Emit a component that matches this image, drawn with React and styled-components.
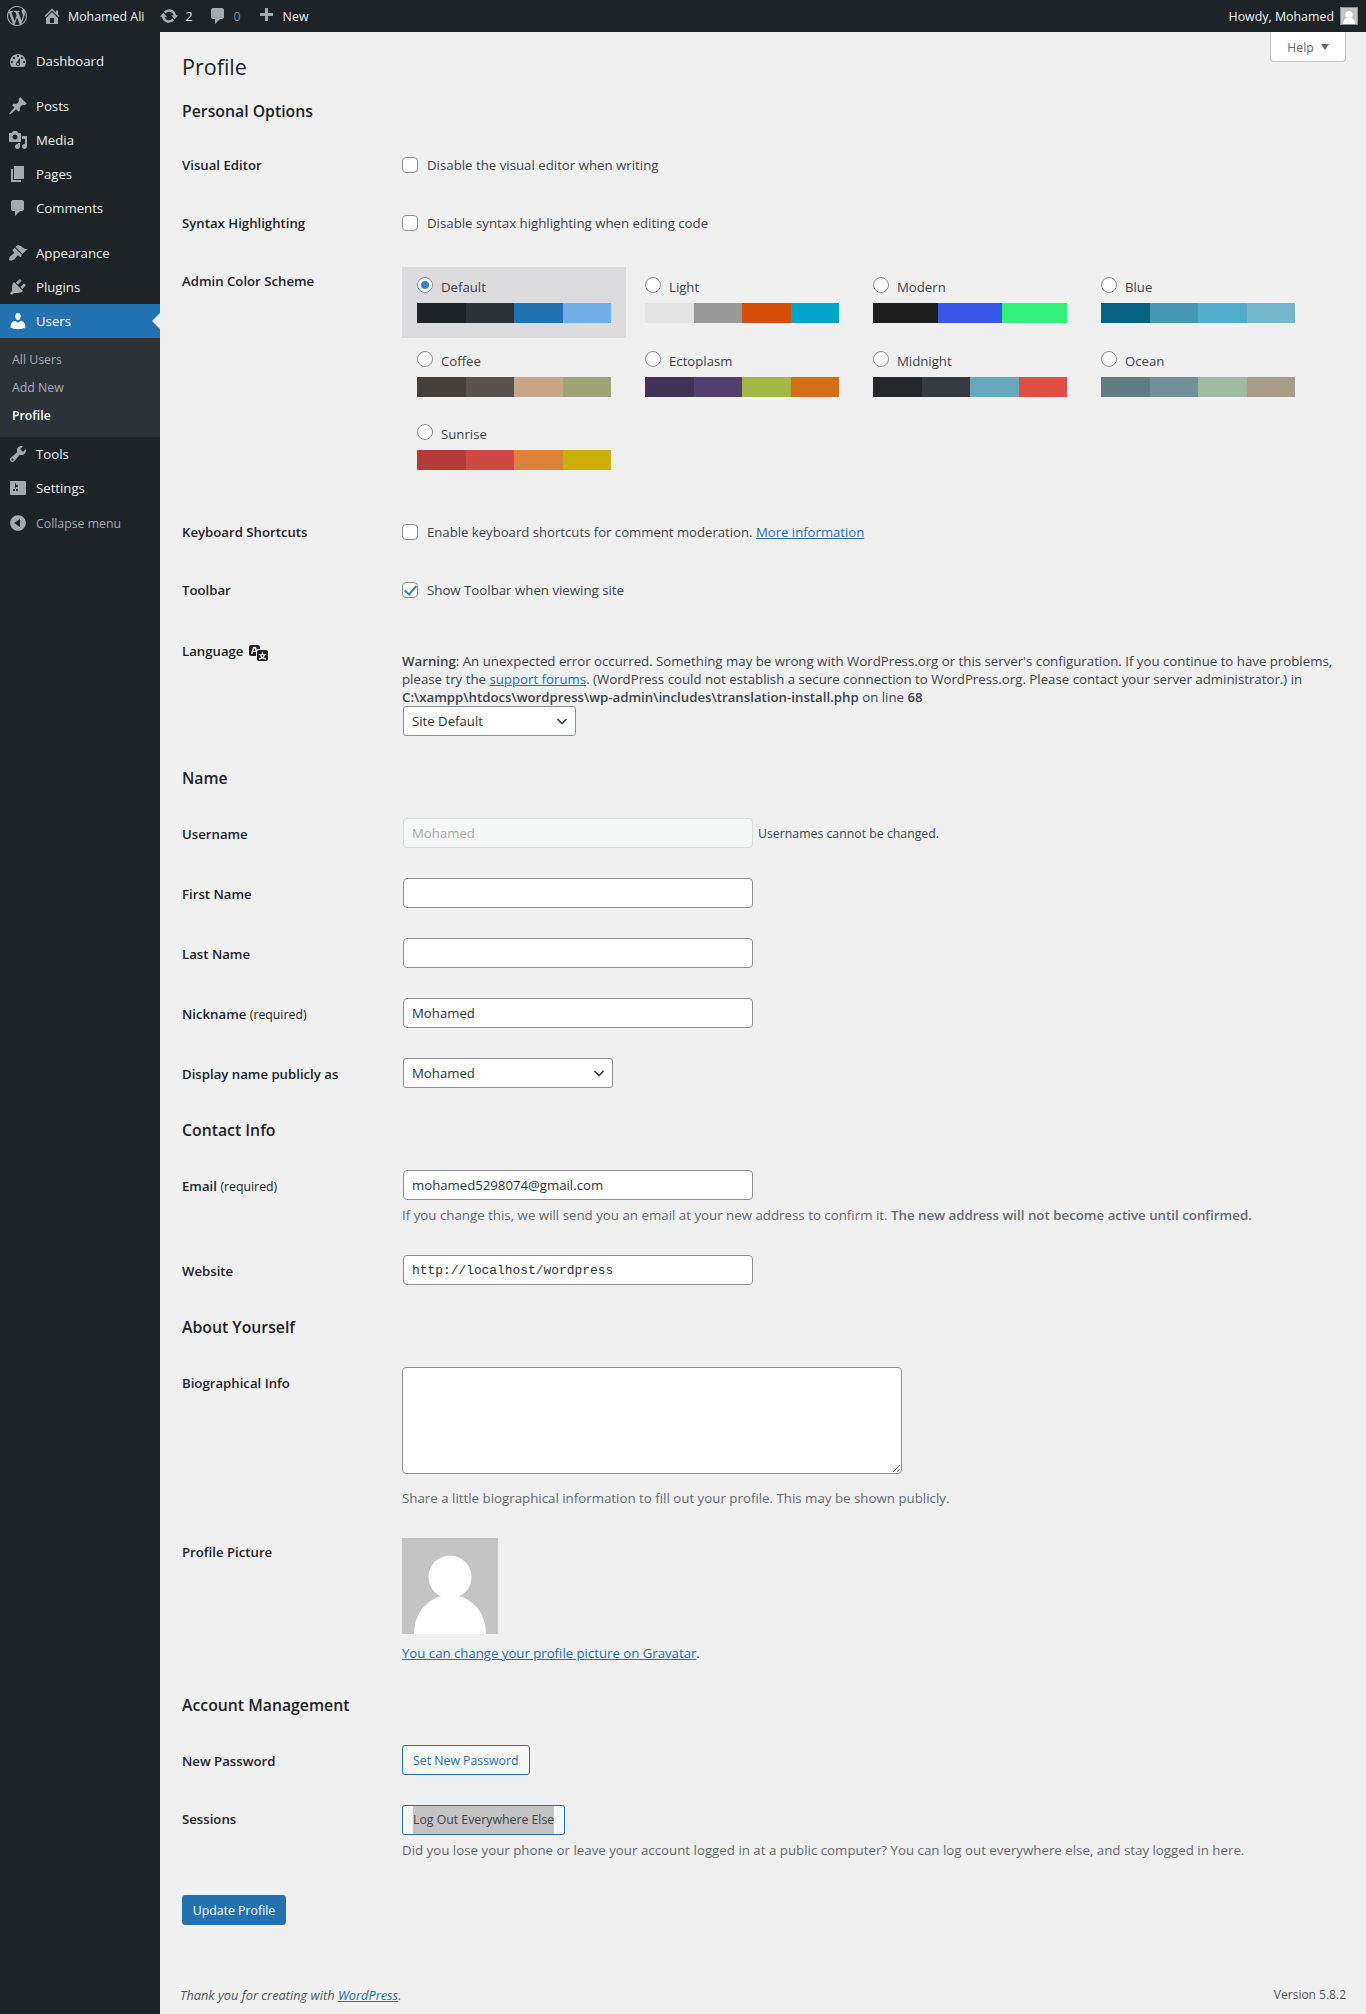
import React from "react";
import styled, { createGlobalStyle } from "styled-components";

const FONT = `"Open Sans", "Noto Sans", sans-serif`;

const GlobalStyle = createGlobalStyle`
    html, body {
        margin: 0;
        padding: 0;
        background: #f0f0f1;
    }
    body {
        font-family: ${FONT};
        font-size: 12px;
        color: #3c434a;
    }
    * {
        box-sizing: border-box;
    }
`;

const ICONS = {
    wordpress: "M20 10c0-5.51-4.49-10-10-10C4.48 0 0 4.49 0 10c0 5.52 4.48 10 10 10 5.51 0 10-4.48 10-10zM7.78 15.37L4.37 6.22c.55-.02 1.17-.08 1.17-.08.5-.06.44-1.13-.06-1.11 0 0-1.45.11-2.37.11-.18 0-.37 0-.58-.01C4.12 2.69 6.87 1.11 10 1.11c2.33 0 4.45.87 6.05 2.34-.68-.11-1.65.39-1.65 1.58 0 .74.45 1.36.9 2.1.35.61.55 1.36.55 2.46 0 1.49-1.4 5-1.4 5l-3.03-8.37c.54-.02.82-.17.82-.17.5-.05.44-1.25-.06-1.22 0 0-1.44.12-2.38.12-.87 0-2.33-.12-2.33-.12-.5-.03-.56 1.2-.06 1.22l.92.08 1.26 3.41zM17.41 10c.24-.64.74-1.87.43-4.25.7 1.29 1.05 2.71 1.05 4.25 0 3.29-1.73 6.24-4.4 7.78.97-2.59 1.94-5.2 2.92-7.78zM6.1 18.09C3.12 16.65 1.11 13.53 1.11 10c0-1.3.23-2.48.72-3.59C3.25 10.3 4.67 14.2 6.1 18.09zm4.03-6.63l2.58 6.98c-.86.29-1.76.45-2.71.45-.79 0-1.57-.11-2.29-.33.81-2.38 1.62-4.74 2.42-7.1z",
    home: "M16 8.5l1.53 1.53-1.06 1.06L10 4.62l-6.47 6.47-1.06-1.06L10 2.5l4 4v-2h2v4zm-6-2.46l6 5.99V18H4v-5.97zM12 17v-5H8v5h4z",
    update: "M10.2 3.28c3.53 0 6.43 2.61 6.92 6h2.08l-3.5 4-3.5-4h2.32c-.45-1.97-2.21-3.44-4.32-3.44-1.45 0-2.73.71-3.54 1.78L4.95 5.66C6.23 4.2 8.11 3.28 10.2 3.28zm-.4 13.44c-3.52 0-6.43-2.61-6.92-6H.8l3.5-4c1.17 1.33 2.33 2.67 3.5 4H5.48c.45 1.97 2.21 3.44 4.32 3.44 1.45 0 2.73-.71 3.54-1.77l1.71 1.95c-1.28 1.46-3.15 2.38-5.25 2.38z",
    comment: "M5 2h9c1.1 0 2 .9 2 2v7c0 1.1-.9 2-2 2h-2l-5 5v-5H5c-1.1 0-2-.9-2-2V4c0-1.1.9-2 2-2z",
    plus: "M17 7v3h-5v5H9v-5H4V7h5V2h3v5h5z",
    dashboard: "M3.76 16h12.48c1.1-1.37 1.76-3.11 1.76-5 0-4.42-3.58-8-8-8s-8 3.58-8 8c0 1.89.66 3.63 1.76 5zM10 4c.55 0 1 .45 1 1s-.45 1-1 1-1-.45-1-1 .45-1 1-1zM6 6c.55 0 1 .45 1 1s-.45 1-1 1-1-.45-1-1 .45-1 1-1zm8 0c.55 0 1 .45 1 1s-.45 1-1 1-1-.45-1-1 .45-1 1-1zm-5.37 5.55L12 7v6c0 1.1-.9 2-2 2s-2-.9-2-2c0-.57.24-1.08.63-1.45zM4 10c.55 0 1 .45 1 1s-.45 1-1 1-1-.45-1-1 .45-1 1-1zm12 0c.55 0 1 .45 1 1s-.45 1-1 1-1-.45-1-1 .45-1 1-1zm-5 3c0-.55-.45-1-1-1s-1 .45-1 1 .45 1 1 1 1-.45 1-1z",
    posts: "M10.44 3.02l1.82-1.82 6.36 6.35-1.83 1.82c-1.05-.68-2.48-.57-3.41.36l-.75.75c-.92.93-1.04 2.35-.35 3.41l-1.83 1.82-2.41-2.41-2.8 2.79c-.42.42-3.38 2.71-3.8 2.29s1.86-3.39 2.28-3.81l2.79-2.79L4.1 9.36l1.83-1.82c1.05.69 2.48.57 3.4-.36l.75-.75c.93-.92 1.05-2.35.36-3.41z",
    media: "M13 11V4c0-.55-.45-1-1-1h-1.67L9 1H5L3.67 3H2c-.55 0-1 .45-1 1v7c0 .55.45 1 1 1h10c.55 0 1-.45 1-1zM7 4.5c1.38 0 2.5 1.12 2.5 2.5S8.38 9.5 7 9.5 4.5 8.38 4.5 7 5.62 4.5 7 4.5zM14 6h5v10.5c0 1.38-1.12 2.5-2.5 2.5S14 17.88 14 16.5s1.12-2.5 2.5-2.5c.17 0 .34.02.5.05V9h-3V6zm-4 8.05V13h2v3.5c0 1.38-1.12 2.5-2.5 2.5S7 17.88 7 16.5 8.12 14 9.5 14c.17 0 .34.02.5.05z",
    pages: "M6 15V2h10v13H6zm-1 1h8v2H3V5h2v11z",
    appearance: "M14.48 11.06L7.41 3.99l1.5-1.5c.5-.56 2.3-.47 3.51.32 1.21.8 1.43 1.28 2.91 2.1 1.18.64 2.45 1.26 4.45.85zm-.71.71L6.7 4.7 4.93 6.47c-.39.39-.39 1.02 0 1.41l1.06 1.06c.39.39.39 1.03 0 1.42-.6.6-1.43 1.11-2.21 1.69-.35.26-.7.53-1.01.84C1.43 13.23.91 15.95 1.2 17.5c1.55.29 4.27-.23 5.56-1.51.31-.32.58-.67.84-1.02.58-.78 1.09-1.6 1.69-2.2.39-.39 1.02-.39 1.41 0l1.06 1.06c.39.39 1.03.39 1.42 0z",
    plugins: "M13.11 4.36L9.87 7.6 8 5.73l3.24-3.24c.35-.34 1.05-.2 1.56.32.52.51.66 1.21.31 1.55zm-8 1.77l.91-1.12 9.01 9.01-1.19.84c-.71.71-2.63 1.16-3.82 1.16H6.14L4.9 17.26c-.59.59-1.54.59-2.12 0-.59-.58-.59-1.53 0-2.12l1.24-1.24v-3.88c0-1.13.4-3.19 1.09-3.89zm7.26 3.97l3.24-3.24c.34-.35 1.04-.21 1.55.31.52.51.66 1.21.31 1.55l-3.24 3.25z",
    users: "M10 9.25c-2.27 0-2.73-3.44-2.73-3.44C7 4.02 7.82 2 9.97 2c2.16 0 2.98 2.02 2.71 3.81 0 0-.41 3.44-2.68 3.44zm0 2.57L12.72 10c2.39 0 4.52 2.33 4.52 4.53v2.49s-3.65 1.13-7.24 1.13c-3.65 0-7.24-1.13-7.24-1.13v-2.49c0-2.25 1.94-4.48 4.47-4.48z",
    tools: "M16.68 9.77c-1.34 1.34-3.3 1.67-4.95.99l-5.41 6.52c-.99.99-2.59.99-3.58 0s-.99-2.59 0-3.57l6.52-5.42c-.68-1.65-.35-3.61.99-4.95 1.28-1.28 3.12-1.62 4.72-1.06l-2.89 2.89 2.82 2.82 2.86-2.87c.53 1.58.18 3.39-1.08 4.65zM3.81 16.21c.4.39 1.04.39 1.43 0 .4-.4.4-1.04 0-1.43-.39-.4-1.03-.4-1.43 0-.39.39-.39 1.03 0 1.43z",
    settings: "M18 16V4c0-.55-.45-1-1-1H3c-.55 0-1 .45-1 1v12c0 .55.45 1 1 1h14c.55 0 1-.45 1-1zM8 11h1c.55 0 1 .45 1 1s-.45 1-1 1H8v1.5c0 .28-.22.5-.5.5s-.5-.22-.5-.5V13H6c-.55 0-1-.45-1-1s.45-1 1-1h1V5.5c0-.28.22-.5.5-.5s.5.22.5.5V7h1c.55 0 1 .45 1 1s-.45 1-1 1h-1v5.5c0 .28-.22.5-.5.5s-.5-.22-.5-.5V9z",
    collapse: "M10 2.16c4.33 0 7.84 3.51 7.84 7.84s-3.51 7.84-7.84 7.84S2.16 14.33 2.16 10 5.71 2.16 10 2.16zm2 11.72V6.12L6.18 9.97z",
    translation: "M11 7H9.49c-.63 0-1.25.3-1.59.7L7 5H4.13l-2.39 7h1.69l.74-2H7v4H2c-1.1 0-2-.9-2-2V5c0-1.1.9-2 2-2h7c1.1 0 2 .9 2 2v2zM6.51 9H4.49l1-2.93zM10 8h7c1.1 0 2 .9 2 2v7c0 1.1-.9 2-2 2h-7c-1.1 0-2-.9-2-2v-7c0-1.1.9-2 2-2zm7.25 5v-1.08h-3.17V9.75h-1.16v2.17H9.75V13h1.28c.11.85.56 1.85 1.28 2.62-.87.36-1.89.62-2.31.62-.01.02.22.97.2 1.46.84 0 2.21-.5 3.28-1.15 1.09.65 2.48 1.15 3.34 1.15-.02-.49.2-1.44.2-1.46-.43 0-1.49-.27-2.38-.63.7-.77 1.14-1.77 1.25-2.61h1.36zm-3.81 1.93c-.5-.46-.85-1.13-1.01-1.93h2.09c-.17.8-.51 1.47-1 1.93l-.04.03s-.03-.02-.04-.03z",
};

const menuGroups = [
    [{ name: "Dashboard", icon: "dashboard" }],
    [
        { name: "Posts", icon: "posts" },
        { name: "Media", icon: "media" },
        { name: "Pages", icon: "pages" },
        { name: "Comments", icon: "comment" },
    ],
    [
        { name: "Appearance", icon: "appearance" },
        { name: "Plugins", icon: "plugins" },
        { name: "Users", icon: "users", active: true },
    ],
];

const colorSchemes = [
    { name: "Default", colors: ["#1d2327", "#2c3338", "#2271b1", "#72aee6"], selected: true },
    { name: "Light", colors: ["#e5e5e5", "#999999", "#d64e07", "#04a4cc"] },
    { name: "Modern", colors: ["#1e1e1e", "#3858e9", "#33f078"] },
    { name: "Blue", colors: ["#096484", "#4796b3", "#52accc", "#74b6ce"] },
    { name: "Coffee", colors: ["#46403c", "#59524c", "#c7a589", "#9ea476"] },
    { name: "Ectoplasm", colors: ["#413256", "#523f6d", "#a3b745", "#d46f15"] },
    { name: "Midnight", colors: ["#25282b", "#363b3f", "#69a8bb", "#e14d43"] },
    { name: "Ocean", colors: ["#627c83", "#738e96", "#9ebaa0", "#aa9d88"] },
    { name: "Sunrise", colors: ["#b43c38", "#cf4944", "#dd823b", "#ccaf0b"] },
];

function Dashicon({ name, size = 20, color }) {
    return (
        <svg width={size} height={size} viewBox="0 0 20 20" fill={color || "currentColor"} fillRule="evenodd" aria-hidden="true">
            <path d={ICONS[name]} />
        </svg>
    );
}

function MysteryMan({ size }) {
    return (
        <svg width={size} height={size} viewBox="0 0 96 96" aria-hidden="true" style={{ display: "block" }}>
            <rect width="96" height="96" fill="#c4c4c4" />
            <circle cx="48" cy="39" r="21.5" fill="#fff" />
            <path d="M12 96C12 73 28 57 48 57s36 16 36 39z" fill="#fff" />
        </svg>
    );
}

function DropDown({ value, width }) {
    return (
        <SelectWrap $width={width}>
            <Select defaultValue={value}>
                <option>{value}</option>
            </Select>
            <Chevron width="16" height="16" viewBox="0 0 16 16" fill="none" stroke="#3c434a" strokeWidth="1.7">
                <path d="M3.5 6l4.5 4.5L12.5 6" />
            </Chevron>
        </SelectWrap>
    );
}

export default function App() {
    return (
        <Page>
            <GlobalStyle />
            <AdminBar>
                <BarGroup>
                    <BarLogo><Dashicon name="wordpress" /></BarLogo>
                    <BarItem $gap={6} $left={15}><Dashicon name="home" /><BarText>Mohamed Ali</BarText></BarItem>
                    <BarItem $gap={6} $left={15}><Dashicon name="update" /><BarText>2</BarText></BarItem>
                    <BarItem $gap={6} $left={15}><Dashicon name="comment" /><BarText $dim>0</BarText></BarItem>
                    <BarItem $gap={7} $left={15}><Dashicon name="plus" /><BarText>New</BarText></BarItem>
                </BarGroup>
                <BarItem $gap={6}>
                    <BarText>Howdy, Mohamed</BarText>
                    <BarAvatar><MysteryMan size={16} /></BarAvatar>
                </BarItem>
            </AdminBar>
            <Columns>
                <Sidebar>
                    {menuGroups.map((group, i) => (
                        <MenuGroup key={i}>
                            {group.map(item => (
                                <MenuItem key={item.name} $active={item.active}>
                                    <Dashicon name={item.icon} />
                                    {item.name}
                                </MenuItem>
                            ))}
                        </MenuGroup>
                    ))}
                    <SubMenu>
                        <SubItem>All Users</SubItem>
                        <SubItem>Add New</SubItem>
                        <SubItem $current>Profile</SubItem>
                    </SubMenu>
                    <MenuItem><Dashicon name="tools" />Tools</MenuItem>
                    <MenuItem><Dashicon name="settings" />Settings</MenuItem>
                    <CollapseItem><Dashicon name="collapse" />Collapse menu</CollapseItem>
                </Sidebar>
                <Main>
                    <HelpTab>Help<HelpArrow /></HelpTab>
                    <Title>Profile</Title>

                    <FirstSection>Personal Options</FirstSection>
                    <Row>
                        <Label>Visual Editor</Label>
                        <CheckField><Check type="checkbox" />Disable the visual editor when writing</CheckField>
                    </Row>
                    <Row>
                        <Label>Syntax Highlighting</Label>
                        <CheckField><Check type="checkbox" />Disable syntax highlighting when editing code</CheckField>
                    </Row>
                    <Row>
                        <Label>Admin Color Scheme</Label>
                        <Field>
                            <SchemeGrid>
                                {colorSchemes.map(s => (
                                    <Scheme key={s.name} $selected={s.selected}>
                                        <SchemeName>
                                            <Radio type="radio" name="scheme" defaultChecked={s.selected} />
                                            <span>{s.name}</span>
                                        </SchemeName>
                                        <Swatches>
                                            {s.colors.map(c => <Swatch key={c} $color={c} />)}
                                        </Swatches>
                                    </Scheme>
                                ))}
                            </SchemeGrid>
                        </Field>
                    </Row>
                    <Row>
                        <Label>Keyboard Shortcuts</Label>
                        <CheckField>
                            <Check type="checkbox" />
                            <ShortcutText>Enable keyboard shortcuts for comment moderation. <Link>More information</Link></ShortcutText>
                        </CheckField>
                    </Row>
                    <Row>
                        <Label>Toolbar</Label>
                        <CheckField><Check type="checkbox" defaultChecked />Show Toolbar when viewing site</CheckField>
                    </Row>
                    <Row>
                        <LanguageLabel>Language <Dashicon name="translation" size={20} color="#1d2327" /></LanguageLabel>
                        <Field>
                            <WarningText>
                                <b>Warning</b>: An unexpected error occurred. Something may be wrong with WordPress.org or this server's configuration. If you continue to have problems,<br />
                                please try the <Link>support forums</Link>. (WordPress could not establish a secure connection to WordPress.org. Please contact your server administrator.) in<br />
                                <b>C:\xampp\htdocs\wordpress\wp-admin\includes\translation-install.php</b> on line <b>68</b>
                            </WarningText>
                            <DropDown value="Site Default" width={173} />
                        </Field>
                    </Row>

                    <Section>Name</Section>
                    <Row>
                        <InputLabel>Username</InputLabel>
                        <InlineField>
                            <TextInput defaultValue="Mohamed" disabled />
                            <InlineNote>Usernames cannot be changed.</InlineNote>
                        </InlineField>
                    </Row>
                    <Row>
                        <InputLabel>First Name</InputLabel>
                        <Field><TextInput /></Field>
                    </Row>
                    <Row>
                        <InputLabel>Last Name</InputLabel>
                        <Field><TextInput /></Field>
                    </Row>
                    <Row>
                        <InputLabel>Nickname <Req>(required)</Req></InputLabel>
                        <Field><TextInput defaultValue="Mohamed" /></Field>
                    </Row>
                    <Row>
                        <InputLabel>Display name publicly as</InputLabel>
                        <Field><DropDown value="Mohamed" width={210} /></Field>
                    </Row>

                    <Section>Contact Info</Section>
                    <Row>
                        <InputLabel>Email <Req>(required)</Req></InputLabel>
                        <Field>
                            <TextInput defaultValue="mohamed5298074@gmail.com" />
                            <Description>If you change this, we will send you an email at your new address to confirm it. <b>The new address will not become active until confirmed.</b></Description>
                        </Field>
                    </Row>
                    <Row>
                        <InputLabel>Website</InputLabel>
                        <Field><TextInput $mono defaultValue="http://localhost/wordpress" /></Field>
                    </Row>

                    <Section>About Yourself</Section>
                    <Row>
                        <InputLabel>Biographical Info</InputLabel>
                        <Field>
                            <BioBox />
                            <BioNote>Share a little biographical information to fill out your profile. This may be shown publicly.</BioNote>
                        </Field>
                    </Row>
                    <Row>
                        <Label>Profile Picture</Label>
                        <Field>
                            <MysteryMan size={96} />
                            <AvatarNote><Link>You can change your profile picture on Gravatar</Link>.</AvatarNote>
                        </Field>
                    </Row>

                    <Section>Account Management</Section>
                    <Row>
                        <InputLabel>New Password</InputLabel>
                        <Field><OutlineButton>Set New Password</OutlineButton></Field>
                    </Row>
                    <Row>
                        <Label>Sessions</Label>
                        <Field>
                            <OutlineButton $dark><Selected>Log Out Everywhere Else</Selected></OutlineButton>
                            <Description>Did you lose your phone or leave your account logged in at a public computer? You can log out everywhere else, and stay logged in here.</Description>
                        </Field>
                    </Row>
                    <SubmitLine><PrimaryButton>Update Profile</PrimaryButton></SubmitLine>

                    <Footer>
                        <Thanks>Thank you for creating with <Link>WordPress</Link>.</Thanks>
                        <span>Version 5.8.2</span>
                    </Footer>
                </Main>
            </Columns>
        </Page>
    );
}

const Page = styled.div`
    min-height: 2014px;
    display: flex;
    flex-direction: column;
`;
const AdminBar = styled.header`
    height: 32px;
    flex-shrink: 0;
    display: flex;
    align-items: center;
    justify-content: space-between;
    padding: 0 8px 0 7px;
    background: #1d2327;
    color: #a7aaad;
    font-size: 12.4px;
`;
const BarGroup = styled.div`
    display: flex;
    align-items: center;
`;
const BarLogo = styled.div`
    display: flex;
    color: #a7aaad;
`;
const BarItem = styled.div`
    display: flex;
    align-items: center;
    gap: ${p => p.$gap}px;
    margin-left: ${p => p.$left || 0}px;
`;
const BarText = styled.span`
    color: ${p => (p.$dim ? "#8c8f94" : "#f0f0f1")};
`;
const BarAvatar = styled.span`
    display: block;
    border: 1px solid #8c8f94;
`;
const Columns = styled.div`
    flex: 1;
    display: flex;
`;
const Sidebar = styled.nav`
    width: 160px;
    flex-shrink: 0;
    padding-top: 12px;
    background: #1d2327;
`;
const MenuGroup = styled.div`
    margin-bottom: 11px;
    &:nth-child(3) {
        margin-bottom: 0;
    }
`;
const MenuItem = styled.div`
    height: 34px;
    display: flex;
    align-items: center;
    gap: 8px;
    padding-left: 8px;
    position: relative;
    font-size: 13.2px;
    color: ${p => (p.$active ? "#ffffff" : "#f0f0f1")};
    background: ${p => (p.$active ? "#2271b1" : "transparent")};
    svg {
        color: ${p => (p.$active ? "#ffffff" : "#a7aaad")};
    }
    ${p => p.$active && `
        &::after {
            content: "";
            position: absolute;
            right: 0;
            top: 9px;
            border: 8px solid transparent;
            border-right-color: #f0f0f1;
            border-left-width: 0;
        }
    `}
`;
const CollapseItem = styled(MenuItem)`
    margin-top: 1px;
    font-size: 12.3px;
    color: #a7aaad;
`;
const SubMenu = styled.div`
    padding: 7px 0 8px;
    background: #2c3338;
`;
const SubItem = styled.div`
    height: 28px;
    display: flex;
    align-items: center;
    padding-left: 12px;
    font-size: 12.3px;
    font-weight: ${p => (p.$current ? 600 : 400)};
    color: ${p => (p.$current ? "#ffffff" : "#a8abae")};
`;
const Main = styled.main`
    flex: 1;
    display: flex;
    flex-direction: column;
    padding: 0 20px 0 22px;
    position: relative;
`;
const HelpTab = styled.div`
    position: absolute;
    top: 0;
    right: 20px;
    width: 76px;
    height: 30px;
    padding-top: 1px;
    display: flex;
    align-items: center;
    justify-content: center;
    gap: 7px;
    background: #ffffff;
    border: 1px solid #c3c4c7;
    border-top: none;
    border-radius: 0 0 4px 4px;
    font-size: 12.2px;
    color: #646970;
`;
const HelpArrow = styled.i`
    border: 4px solid transparent;
    border-top: 6px solid #646970;
    border-bottom: none;
`;
const Title = styled.h1`
    margin: 20px 0 0;
    padding-bottom: 3px;
    font-size: 21.5px;
    font-weight: 400;
    line-height: 30px;
    color: #1d2327;
`;
const Section = styled.h2`
    margin: 18px 0 16px;
    font-size: 15.8px;
    font-weight: 600;
    line-height: 18px;
    color: #1d2327;
`;
const FirstSection = styled(Section)`
    margin: 17px 0 16px;
`;
const Row = styled.div`
    display: flex;
    align-items: flex-start;
`;
const Label = styled.div`
    width: 220px;
    flex-shrink: 0;
    padding: 20px 0;
    font-size: 13.2px;
    font-weight: 600;
    line-height: 18px;
    color: #1d2327;
`;
const InputLabel = styled(Label)`
    padding: 22px 0 18px;
`;
const LanguageLabel = styled(Label)`
    display: flex;
    align-items: center;
    gap: 6px;
    padding-top: 20px;
    svg {
        margin-top: 3px;
    }
`;
const Req = styled.span`
    font-weight: 400;
    font-size: 12.3px;
`;
const Field = styled.div`
    flex: 1;
    padding: 15px 0;
    font-size: 13.2px;
    line-height: 21px;
`;
const InlineField = styled(Field)`
    display: flex;
    align-items: center;
    gap: 5px;
`;
const InlineNote = styled.span`
    font-size: 12.3px;
`;
const CheckField = styled.label`
    flex: 1;
    display: flex;
    align-items: center;
    gap: 9px;
    padding: 20px 0;
    font-size: 13.25px;
    line-height: 18px;
`;
const ShortcutText = styled.span`
    font-size: 13.15px;
`;
const Check = styled.input`
    appearance: none;
    width: 16px;
    height: 16px;
    margin: 0;
    flex-shrink: 0;
    position: relative;
    background: #ffffff;
    border: 1px solid #8c8f94;
    border-radius: 4px;
    &:checked::before {
        content: "";
        position: absolute;
        left: 4px;
        top: 0;
        width: 5px;
        height: 10px;
        border: solid #3582c4;
        border-width: 0 2.5px 2.5px 0;
        transform: rotate(40deg);
    }
`;
const Radio = styled.input`
    appearance: none;
    width: 16px;
    height: 16px;
    margin: 0;
    flex-shrink: 0;
    position: relative;
    background: #ffffff;
    border: 1px solid #8c8f94;
    border-radius: 50%;
    &:checked::before {
        content: "";
        position: absolute;
        left: 3px;
        top: 3px;
        width: 8px;
        height: 8px;
        border-radius: 50%;
        background: #3582c4;
    }
`;
const SchemeGrid = styled.div`
    display: grid;
    grid-template-columns: repeat(4, 224px);
    grid-auto-rows: 71px;
    column-gap: 4px;
    row-gap: 2.6px;
    margin-bottom: 2.85px;
`;
const Scheme = styled.div`
    padding: 10px 15px 0;
    background: ${p => (p.$selected ? "#dcdcde" : "transparent")};
`;
const SchemeName = styled.label`
    height: 20px;
    display: flex;
    gap: 8px;
    font-size: 13.2px;
    line-height: 20px;
    margin-bottom: 6px;
`;
const Swatches = styled.div`
    height: 20px;
    display: flex;
`;
const Swatch = styled.div`
    flex: 1;
    background: ${p => p.$color};
`;
const Link = styled.a`
    color: #2271b1;
    text-decoration: underline;
`;
const WarningText = styled.div`
    padding-top: 18px;
    font-size: 13.25px;
    line-height: 18px;
    white-space: nowrap;
    b {
        font-weight: 600;
    }
`;
const SelectWrap = styled.div`
    width: ${p => p.$width}px;
    margin-left: 1px;
    position: relative;
`;
const Select = styled.select`
    appearance: none;
    display: block;
    width: 100%;
    height: 30px;
    padding: 0 24px 0 8px;
    background: #ffffff;
    border: 1px solid #8c8f94;
    border-radius: 3px;
    font-family: ${FONT};
    font-size: 13.2px;
    color: #2c3338;
`;
const Chevron = styled.svg`
    position: absolute;
    right: 6px;
    top: 7px;
    pointer-events: none;
`;
const TextInput = styled.input`
    display: block;
    width: 350px;
    height: 30px;
    margin-left: 1px;
    padding: 0 8px;
    background: #ffffff;
    border: 1px solid #8c8f94;
    border-radius: 4px;
    font-family: ${p => (p.$mono ? `"Liberation Mono", monospace` : FONT)};
    font-size: ${p => (p.$mono ? "12.9px" : "13.2px")};
    color: #2c3338;
    &:disabled {
        background: #f6f7f7;
        border-color: #dcdcde;
        color: #a7aaad;
    }
`;
const Description = styled.p`
    margin: 5px 0 -1px;
    font-size: 13.3px;
    line-height: 21px;
    color: #646970;
    white-space: nowrap;
    b {
        font-weight: 600;
    }
`;
const BioBox = styled.textarea`
    display: block;
    width: 500px;
    height: 107px;
    background: #ffffff;
    border: 1px solid #8c8f94;
    border-radius: 4px;
`;
const BioNote = styled(Description)`
    margin: 14px 0 -1px;
`;
const AvatarNote = styled.p`
    margin: 9px 0 -1px;
    font-size: 13.2px;
    line-height: 21px;
`;
const OutlineButton = styled.button`
    display: block;
    height: 30px;
    padding: 0 10px;
    background: #f6f7f7;
    border: 1px solid #2271b1;
    border-radius: 3px;
    font-family: ${FONT};
    font-size: 12.3px;
    color: ${p => (p.$dark ? "#3c434a" : "#2271b1")};
`;
const Selected = styled.span`
    display: block;
    line-height: 28px;
    background: #c3c4c3;
`;
const SubmitLine = styled.div`
    margin-top: 20px;
`;
const PrimaryButton = styled.button`
    display: block;
    width: 104px;
    height: 30px;
    padding: 0;
    background: #2271b1;
    border: 1px solid #2271b1;
    border-radius: 3px;
    font-family: ${FONT};
    font-size: 12.3px;
    color: #ffffff;
`;
const Footer = styled.footer`
    margin-top: auto;
    padding-bottom: 10px;
    display: flex;
    justify-content: space-between;
    font-size: 12px;
    line-height: 18px;
    color: #50575e;
`;
const Thanks = styled.em`
    margin-left: -2px;
    font-size: 12.8px;
`;
